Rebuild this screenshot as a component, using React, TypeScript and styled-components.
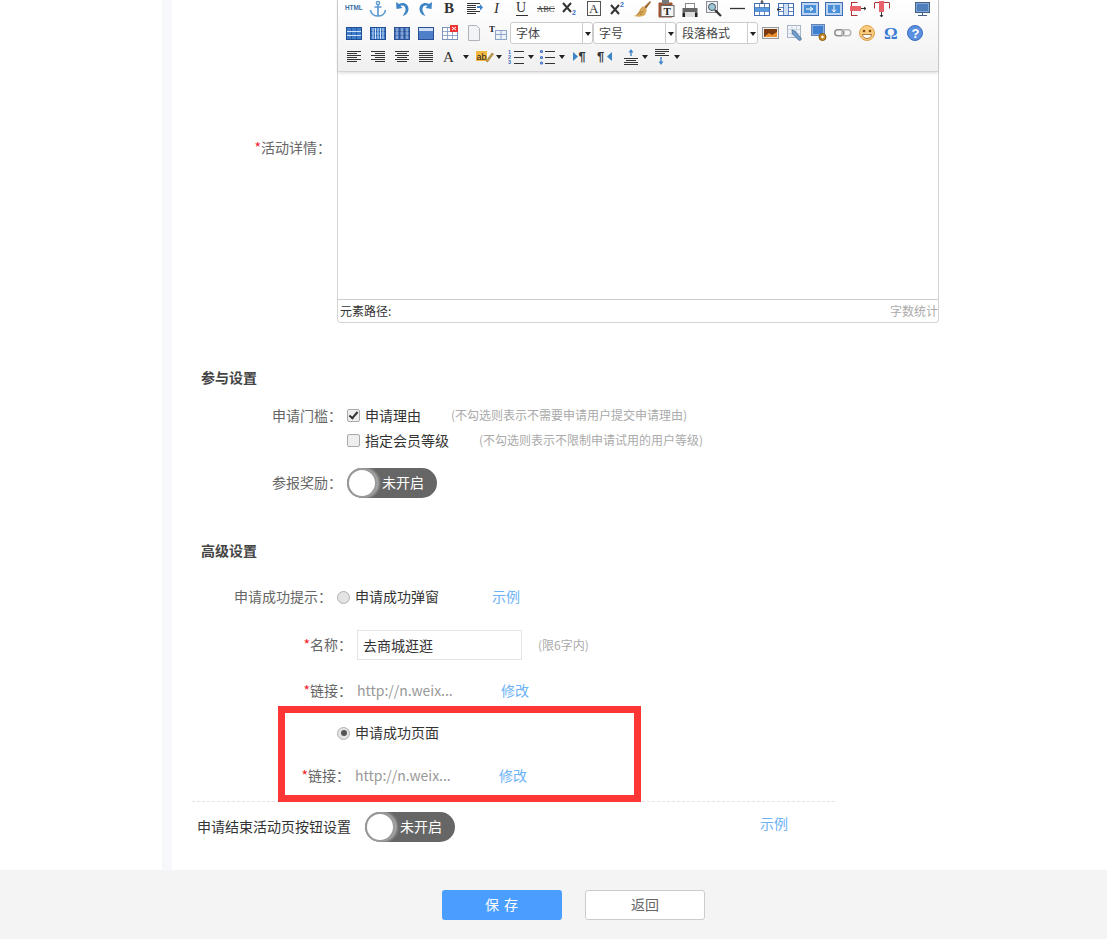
import React from "react";
import styled, { createGlobalStyle } from "styled-components";

const GlobalStyle = createGlobalStyle`
  html, body {
    margin: 0;
    padding: 0;
    background: #fff;
    font-family: "Noto Sans CJK SC", "Open Sans", sans-serif;
    font-size: 14px;
    color: #666;
  }
`;

const Ico = ({ children }: { children: React.ReactNode }) => (
  <svg width="18" height="18" viewBox="0 0 18 18">{children}</svg>
);

const serif = "'Liberation Serif', serif";
const sans = "'Liberation Sans', sans-serif";

// table icon used by most of the grid buttons
const Grid = ({ stroke = "#3f6db3", fill = "#dfe9f7", children }: { stroke?: string; fill?: string; children?: React.ReactNode }) => (
  <>
    <rect x="1.5" y="3.5" width="15" height="12" fill={fill} stroke={stroke} />
    <path d="M1.5 7.5h15M1.5 11.5h15M6.5 3.5v12M11.5 3.5v12" stroke={stroke} strokeWidth=".8" fill="none" />
    {children}
  </>
);

const Lines = ({ rows }: { rows: [number, number, number][] }) => (
  <path d={rows.map(([y, a, b]) => `M${a} ${y}.5H${b}`).join("")} stroke="#333" fill="none" />
);

const icons: Record<string, React.ReactNode> = {
  html: <Ico><text x="0" y="10" fontFamily={sans} fontSize="6.4" fontWeight="700" fill="#3a6ea5">HTML</text></Ico>,
  anchor: (
    <Ico>
      <circle cx="9" cy="3" r="1.6" fill="none" stroke="#5d9bd3" strokeWidth="1.4" />
      <path d="M9 4.5V16M5.5 7h7M1.5 10c.5 4 4 6 7.5 6s7-2 7.5-6" fill="none" stroke="#5d9bd3" strokeWidth="1.7" />
    </Ico>
  ),
  undo: <Ico><path d="M3 2l.5 7 6-1-2-2c3-1.5 5.500 1 5 4-.3 2-1.500 4-3 6 4-1 6-4 6-7 0-5-5-7.500-9.500-5z" fill="#3d85c6" /></Ico>,
  redo: <Ico><path d="M15 2l-.5 7-6-1 2-2c-3-1.500-5.500 1-5 4 .3 2 1.500 4 3 6-4-1-6-4-6-7 0-5 5-7.500 9.500-5z" fill="#3d85c6" /></Ico>,
  bold: <Ico><text x="3" y="13" fontFamily={serif} fontSize="15" fontWeight="700" fill="#333">B</text></Ico>,
  indent: (
    <Ico>
      <Lines rows={[[3, 2, 15], [5, 2, 11], [7, 2, 11], [9, 2, 11], [11, 2, 15], [13, 2, 11]]} />
      <path d="M12 6h3V4l3 3.500-3 3V8h-3z" fill="#3d85c6" />
    </Ico>
  ),
  italic: <Ico><text x="5" y="13" fontFamily={serif} fontSize="15" fontStyle="italic" fill="#333">I</text></Ico>,
  under: (
    <Ico>
      <text x="3" y="12" fontFamily={serif} fontSize="14" fill="#333">U</text>
      <path d="M3 15.500h12" stroke="#333" />
    </Ico>
  ),
  strike: (
    <Ico>
      <text x="0" y="12" fontFamily={serif} fontSize="8.500" fill="#444">ABC</text>
      <path d="M0 8.500h18" stroke="#444" />
    </Ico>
  ),
  sub: (
    <Ico>
      <path d="M2 3l8 9M10 3l-8 9" stroke="#333" strokeWidth="2" />
      <text x="11" y="15" fontFamily={sans} fontSize="7" fontWeight="700" fill="#3d6fc6">2</text>
    </Ico>
  ),
  boxA: (
    <Ico>
      <rect x="2.500" y="1.500" width="13" height="14" fill="#fff" stroke="#555" />
      <text x="4" y="13" fontFamily={serif} fontSize="13" fill="#333">A</text>
    </Ico>
  ),
  sup: (
    <Ico>
      <path d="M2 5l8 9M10 5l-8 9" stroke="#333" strokeWidth="2" />
      <text x="11" y="7" fontFamily={sans} fontSize="7" fontWeight="700" fill="#3d6fc6">2</text>
    </Ico>
  ),
  brush: (
    <Ico>
      <path d="M11 7l6-6 1 1-5 7z" fill="#9a6a2f" />
      <path d="M10 6l4 4-2 5c-3 2-7 2-11 1 3-1 5-4 6-7z" fill="#d8a95b" />
      <path d="M4 15l4-4M7 15l3-4" stroke="#a8772f" />
    </Ico>
  ),
  paste: (
    <Ico>
      <rect x="1.500" y="2.500" width="14" height="15" rx="1" fill="#a0522d" />
      <rect x="5" y="0" width="7" height="4" fill="#777" />
      <rect x="4" y="5.500" width="13" height="11" fill="#f4f4f4" stroke="#666" />
      <text x="6.500" y="15" fontFamily={serif} fontSize="11" fontWeight="700" fill="#222">T</text>
    </Ico>
  ),
  print: (
    <Ico>
      <rect x="4.500" y="3.500" width="9" height="6" fill="#fff" stroke="#888" />
      <rect x="1.500" y="8" width="15" height="5" fill="#666" />
      <rect x="1.500" y="13" width="15" height="4" fill="#222" />
      <rect x="4" y="12" width="10" height="5" fill="#ddd" />
    </Ico>
  ),
  preview: (
    <Ico>
      <rect x="1.500" y="1.500" width="11" height="11" fill="#eef2f7" stroke="#8a8f96" />
      <circle cx="7" cy="7" r="3.500" fill="#9cc8dc" stroke="#555" />
      <path d="M10 10l6 6" stroke="#333" strokeWidth="2.200" />
    </Ico>
  ),
  hr: <Ico><path d="M1 8.500h15" stroke="#333" strokeWidth="1.300" /></Ico>,
  rowAbove: (
    <Ico>
      <Grid fill="#fff"><rect x="2" y="8" width="14" height="3.500" fill="#5a9be0" /></Grid>
      <path d="M9 0v4M7.500 2h3" stroke="#333" />
    </Ico>
  ),
  colLeft: (
    <Ico>
      <Grid fill="#fff"><rect x="7" y="4" width="4" height="11" fill="#cfe0f5" /></Grid>
      <path d="M-1 9.500h5M1 8v3" stroke="#333" />
    </Ico>
  ),
  mergeRight: (
    <Ico>
      <rect x=".5" y="2.500" width="17" height="13" fill="#bcd4ef" stroke="#3f6db3" />
      <rect x="3" y="5" width="12" height="8" fill="#4a90d9" />
      <path d="M5 9h6M9 7l3 2-3 2" stroke="#fff" fill="none" />
    </Ico>
  ),
  mergeDown: (
    <Ico>
      <rect x=".5" y="2.500" width="17" height="13" fill="#bcd4ef" stroke="#3f6db3" />
      <rect x="3" y="5" width="12" height="8" fill="#4a90d9" />
      <path d="M9 5.500v6M7 9.500l2 2.500 2-2.500" stroke="#fff" fill="none" />
    </Ico>
  ),
  delCol: (
    <Ico>
      <path d="M2.500 2v14M2.500 2.500h6M2.500 15.500h6" stroke="#a33" fill="none" />
      <rect x="1" y="6" width="11" height="5" fill="#e8636b" />
      <path d="M12 8.500h5M15 7l2 1.500-2 1.500" stroke="#333" fill="none" />
    </Ico>
  ),
  delRow: (
    <Ico>
      <path d="M1.500 2.500v6M16.500 2.500v6M2 2.500h14" stroke="#a33" fill="none" />
      <rect x="6" y="1" width="5" height="11" fill="#e8636b" />
      <path d="M8.500 12v5M7 15l1.500 2 1.500-2" stroke="#333" fill="none" />
    </Ico>
  ),
  monitor: (
    <Ico>
      <rect x="1.500" y="2.500" width="14" height="10" fill="#7fa9d8" stroke="#46607f" />
      <rect x="3" y="4" width="11" height="7" fill="#4f7fbb" />
      <path d="M8.500 13v2M4 15.500h9" stroke="#46607f" />
    </Ico>
  ),
  tRow: <Ico><Grid fill="#3f7cc9" stroke="#1f4f94"><path d="M2 7.500h14M2 11.500h14" stroke="#cfe3fa" /></Grid></Ico>,
  tCol: <Ico><Grid fill="#3f7cc9" stroke="#1f4f94"><path d="M6.500 4v11M11.500 4v11M4 4v11M9 4v11M14 4v11" stroke="#cfe3fa" /></Grid></Ico>,
  tCell: <Ico><Grid fill="#4f7cc0" stroke="#2a4f94"><path d="M4 4v11M9 4v11M14 4v11" stroke="#dbe7f7" strokeWidth=".7" /></Grid></Ico>,
  tHead: (
    <Ico>
      <rect x="1.500" y="3.500" width="15" height="12" fill="#4f7fc8" stroke="#2a4f94" />
      <rect x="2" y="4" width="14" height="3" fill="#cfe0f5" />
    </Ico>
  ),
  tDel: (
    <Ico>
      <Grid fill="#fff" stroke="#7c95bd" />
      <rect x="9" y="1" width="8" height="7" fill="#e33" />
      <path d="M11 3l4 3M15 3l-4 3" stroke="#fff" />
    </Ico>
  ),
  page: (
    <Ico>
      <path d="M3.500 1.500h8l3 3v12h-11z" fill="#f1f3f6" stroke="#b0b4ba" />
    </Ico>
  ),
  tTitle: (
    <Ico>
      <text x="0" y="8" fontFamily={serif} fontSize="9" fontWeight="700" fill="#222">T</text>
      <rect x="6.500" y="6.500" width="11" height="9" fill="#eef2f9" stroke="#8fa3c8" />
      <path d="M6.500 10.500h11M12 6.500v9" stroke="#8fa3c8" />
    </Ico>
  ),
  alignL: <Ico><Lines rows={[[3, 2, 16], [5, 2, 12], [7, 2, 16], [9, 2, 12], [11, 2, 16], [13, 2, 12]]} /></Ico>,
  alignR: <Ico><Lines rows={[[3, 2, 16], [5, 6, 16], [7, 2, 16], [9, 6, 16], [11, 2, 16], [13, 6, 16]]} /></Ico>,
  alignC: <Ico><Lines rows={[[3, 2, 16], [5, 4, 14], [7, 2, 16], [9, 4, 14], [11, 2, 16], [13, 4, 14]]} /></Ico>,
  alignJ: <Ico><Lines rows={[[3, 2, 16], [5, 2, 16], [7, 2, 16], [9, 2, 16], [11, 2, 16], [13, 2, 16]]} /></Ico>,
  fontA: <Ico><text x="2" y="14" fontFamily={serif} fontSize="15" fill="#333">A</text></Ico>,
  ab: (
    <Ico>
      <rect x="0" y="3" width="11" height="10" fill="#f5b942" />
      <text x=".5" y="12" fontFamily={sans} fontSize="9" fill="#222">ab</text>
      <path d="M10 13l6-8 1.500 1-6 8z" fill="#c9a14a" stroke="#7a5a1f" strokeWidth=".5" />
    </Ico>
  ),
  ol: (
    <Ico>
      <text x="0" y="6" fontFamily={sans} fontSize="5.500" fontWeight="700" fill="#3d6fc6">1</text>
      <text x="0" y="11" fontFamily={sans} fontSize="5.500" fontWeight="700" fill="#3d6fc6">2</text>
      <text x="0" y="16" fontFamily={sans} fontSize="5.500" fontWeight="700" fill="#3d6fc6">3</text>
      <Lines rows={[[3, 6, 16], [9, 6, 16], [15, 6, 16]]} />
    </Ico>
  ),
  ul: (
    <Ico>
      <g fill="none" stroke="#3d6fc6" strokeWidth="1.200">
        <circle cx="2.500" cy="3.500" r="1" />
        <circle cx="2.500" cy="9.500" r="1" />
        <circle cx="2.500" cy="15" r="1" />
      </g>
      <Lines rows={[[3, 6, 16], [9, 6, 16], [15, 6, 16]]} />
    </Ico>
  ),
  ltr: (
    <Ico>
      <path d="M1 4l5 4.500L1 13z" fill="#3d85c6" />
      <text x="6.500" y="13" fontFamily={sans} fontSize="13" fontWeight="700" fill="#333">¶</text>
    </Ico>
  ),
  rtl: (
    <Ico>
      <text x="1" y="13" fontFamily={sans} fontSize="13" fontWeight="700" fill="#333">¶</text>
      <path d="M16 4l-5 4.500 5 4.500z" fill="#3d85c6" />
    </Ico>
  ),
  lineUp: (
    <Ico>
      <path d="M9 1l2.500 3.500h-1.800V8h-1.400V4.500H6.500z" fill="#3d85c6" />
      <Lines rows={[[10, 2, 16], [12, 4, 14], [14, 2, 16], [16, 2, 16]]} />
    </Ico>
  ),
  lineDown: (
    <Ico>
      <Lines rows={[[1, 1, 15], [3, 1, 15], [5, 1, 11], [7, 1, 15]]} />
      <path d="M7 17l-2.500-3.500h1.800V9h1.400v4.500h1.800z" fill="#3d85c6" />
    </Ico>
  ),
  image: (
    <Ico>
      <rect x=".5" y="3.500" width="16" height="11" fill="#eee" stroke="#999" />
      <rect x="2" y="5" width="13" height="8" fill="#7a3a10" />
      <path d="M2 13l5-4 3 2 5-3v5z" fill="#e8902c" />
    </Ico>
  ),
  wrench: (
    <Ico>
      <rect x="1.500" y="1.500" width="13" height="12" fill="#f2f5fa" stroke="#a9b5c6" />
      <path d="M1.500 5.500h13M1.500 9.500h13M6 1.500v12M10.500 1.500v12" stroke="#c3ccd9" strokeWidth=".7" />
      <path d="M6 6l3 1 6 7c1 2-1 3-2.500 2l-6-6z" fill="#6f9cc9" stroke="#3f6a96" strokeWidth=".7" />
    </Ico>
  ),
  video: (
    <Ico>
      <rect x="1.500" y=".5" width="13" height="11" fill="#8db0de" stroke="#5f83b5" />
      <rect x="3" y="2" width="10" height="8" fill="#3f7fd0" />
      <circle cx="12.500" cy="13" r="3.500" fill="#c88a2a" stroke="#8a5a10" />
      <circle cx="12.500" cy="13" r="1.200" fill="#fff" />
    </Ico>
  ),
  link: (
    <Ico>
      <rect x=".8" y="5.800" width="9" height="6" rx="3" fill="none" stroke="#8e8e8e" strokeWidth="1.500" />
      <rect x="7.800" y="5.800" width="9" height="6" rx="3" fill="none" stroke="#b5b5b5" strokeWidth="1.500" />
    </Ico>
  ),
  smile: (
    <Ico>
      <circle cx="9" cy="9" r="7.500" fill="#f9cd7c" stroke="#e0a050" />
      <circle cx="6" cy="7" r="1.300" fill="#8a4a10" />
      <circle cx="12" cy="7" r="1.300" fill="#8a4a10" />
      <path d="M4.500 10.500h9c-.5 3-2.500 4-4.500 4s-4-1-4.500-4z" fill="#fff" stroke="#8a4a10" strokeWidth=".7" />
    </Ico>
  ),
  omega: <Ico><text x="2" y="15" fontFamily={serif} fontSize="17" fontWeight="700" fill="#3a7bd5">Ω</text></Ico>,
  help: (
    <Ico>
      <circle cx="9" cy="9" r="7.500" fill="#5b8fe0" stroke="#3e6fc0" />
      <text x="5.500" y="14" fontFamily={sans} fontSize="13" fontWeight="700" fill="#fff">?</text>
    </Ico>
  ),
};

type Item = { icon: string; ml?: number; w?: number; caret?: boolean };

const row1: Item[] = [
  { icon: "html" }, { icon: "anchor" }, { icon: "undo" }, { icon: "redo" }, { icon: "bold" }, { icon: "indent" },
  { icon: "italic" }, { icon: "under" }, { icon: "strike" }, { icon: "sub" }, { icon: "boxA" }, { icon: "sup" },
  { icon: "brush" }, { icon: "paste" }, { icon: "print" }, { icon: "preview" }, { icon: "hr" }, { icon: "rowAbove" },
  { icon: "colLeft" }, { icon: "mergeRight" }, { icon: "mergeDown" }, { icon: "delCol" }, { icon: "delRow" },
  { icon: "monitor", ml: 17 },
];
const row2a: Item[] = [
  { icon: "tRow" }, { icon: "tCol" }, { icon: "tCell" }, { icon: "tHead" }, { icon: "tDel" }, { icon: "page" }, { icon: "tTitle" },
];
const row2b: Item[] = [
  { icon: "image", ml: 1 }, { icon: "wrench" }, { icon: "video" }, { icon: "link" }, { icon: "smile" }, { icon: "omega" }, { icon: "help" },
];
const row3: Item[] = [
  { icon: "alignL" }, { icon: "alignR" }, { icon: "alignC" }, { icon: "alignJ" },
  { icon: "fontA", caret: true },
  { icon: "ab", ml: 6, w: 20, caret: true },
  { icon: "ol", ml: 5, w: 20, caret: true },
  { icon: "ul", ml: 4, w: 20, caret: true },
  { icon: "ltr", ml: 4 }, { icon: "rtl" },
  { icon: "lineUp", ml: 4, w: 20, caret: true },
  { icon: "lineDown", ml: 5, w: 20, caret: true },
];

const renderTools = (items: Item[]) =>
  items.map((t) => (
    <React.Fragment key={t.icon}>
      <Tool $w={t.w ?? 24} $ml={t.ml ?? 0}>{icons[t.icon]}</Tool>
      {t.caret && <Caret />}
    </React.Fragment>
  ));

const Switch = () => (
  <Toggle>
    <Knob />
    <ToggleText>未开启</ToggleText>
  </Toggle>
);

const App = () => (
  <Page>
    <GlobalStyle />
    <Main>
      <Gutter />
      <Form>
        <EditorRow>
          <Label $w={159} $top={137}><Star>*</Star>活动详情：</Label>
          <Editor>
            <Toolbar>
              <FirstToolRow>{renderTools(row1)}</FirstToolRow>
              <ToolRow>
                {renderTools(row2a)}
                <Combo $w={83}>字体</Combo>
                <Combo $w={83}>字号</Combo>
                <Combo $w={82}>段落格式</Combo>
                {renderTools(row2b)}
              </ToolRow>
              <ToolRow>{renderTools(row3)}</ToolRow>
            </Toolbar>
            <EditArea />
            <StatusBar>
              <span>元素路径:</span>
              <WordCount>字数统计</WordCount>
            </StatusBar>
          </Editor>
        </EditorRow>

        <SectionTitle $mt={45}>参与设置</SectionTitle>
        <Row $mt={15} $h={25}>
          <Label $w={170}>申请门槛：</Label>
          <Checkbox $checked />
          <OptionText>申请理由</OptionText>
          <Hint $ml={30}>(不勾选则表示不需要申请用户提交申请理由)</Hint>
        </Row>
        <Row $h={25} $pl={175}>
          <Checkbox />
          <OptionText>指定会员等级</OptionText>
          <Hint $ml={30}>(不勾选则表示不限制申请试用的用户等级)</Hint>
        </Row>
        <Row $mt={15} $h={30}>
          <Label $w={170}>参报奖励：</Label>
          <Switch />
        </Row>

        <SectionTitle $mt={43}>高级设置</SectionTitle>
        <Row $mt={24} $h={24}>
          <Label $w={160}>申请成功提示：</Label>
          <Radio />
          <OptionText>申请成功弹窗</OptionText>
          <LinkText $ml={53}>示例</LinkText>
        </Row>
        <Row $mt={21} $h={30}>
          <Label $w={180}><Star>*</Star>名称：</Label>
          <NameInput>去商城逛逛</NameInput>
          <Hint $ml={16}>(限6字内)</Hint>
        </Row>
        <Row $mt={19} $h={24}>
          <Label $w={180}><Star>*</Star>链接：</Label>
          <UrlText>http://n.weix...</UrlText>
          <LinkText $ml={48}>修改</LinkText>
        </Row>

        <Highlight>
          <Row $h={20} $mt={10} $pl={52}>
            <Radio $checked />
            <OptionText>申请成功页面</OptionText>
          </Row>
          <Row $h={24} $mt={21}>
            <Label $w={65}><Star>*</Star>链接：</Label>
            <UrlText>http://n.weix...</UrlText>
            <LinkText $ml={48}>修改</LinkText>
          </Row>
        </Highlight>
        <Divider />

        <Row $mt={10} $h={30} $pl={25}>
          <EndLabel>申请结束活动页按钮设置</EndLabel>
          <Switch />
          <LinkText $ml={305} $up>示例</LinkText>
        </Row>
      </Form>
    </Main>
    <Footer>
      <SaveButton>保 存</SaveButton>
      <BackButton>返回</BackButton>
    </Footer>
  </Page>
);

export default App;

const Page = styled.div`
  display: flex;
  flex-direction: column;
  width: 1107px;
  height: 939px;
  overflow: hidden;
`;

const Main = styled.main`
  display: flex;
  height: 870px;
`;

const Gutter = styled.div`
  width: 10px;
  margin-left: 162px;
  background: #f6f8fc;
`;

const Form = styled.div`
  flex: 1;
  display: flex;
  flex-direction: column;
  min-width: 0;
`;

const EditorRow = styled.div`
  display: flex;
  align-items: flex-start;
`;

const Editor = styled.div`
  width: 602px;
  margin-left: 1px;
  box-sizing: border-box;
  border: 1px solid #d4d4d4;
  border-top: none;
  border-radius: 0 0 4px 4px;
`;

const Toolbar = styled.div`
  height: 72px;
  box-sizing: border-box;
  padding-left: 4px;
  background: linear-gradient(#ffffff, #f0f0f0);
  box-shadow: 0 1px 3px rgba(0, 0, 0, 0.15);
  border-bottom: 1px solid #d4d4d4;
  position: relative;
`;

const ToolRow = styled.div`
  display: flex;
  align-items: center;
  height: 24px;
`;

const FirstToolRow = styled(ToolRow)`
  height: 21px;
  box-sizing: border-box;
  padding-bottom: 4px;
`;

const Tool = styled.span<{ $w: number; $ml: number }>`
  flex: none;
  display: flex;
  align-items: center;
  justify-content: center;
  width: ${(p) => p.$w}px;
  margin-left: ${(p) => p.$ml}px;
`;

const Caret = styled.span`
  flex: none;
  width: 0;
  height: 0;
  margin-left: 1px;
  border: 3.5px solid transparent;
  border-top: 4px solid #222;
  border-bottom: none;
`;

const Combo = styled.div<{ $w: number }>`
  flex: none;
  position: relative;
  box-sizing: border-box;
  width: ${(p) => p.$w}px;
  height: 22px;
  padding-left: 5px;
  background: #fff;
  border: 1px solid #ccc;
  border-radius: 3px;
  font-size: 12px;
  line-height: 20px;
  color: #444;

  &::before {
    content: "";
    position: absolute;
    top: 0;
    bottom: 0;
    right: 9px;
    border-left: 1px solid #ccc;
  }

  &::after {
    content: "";
    position: absolute;
    top: 9px;
    right: 1px;
    border: 3px solid transparent;
    border-top: 4px solid #222;
    border-bottom: none;
  }
`;

const EditArea = styled.div`
  height: 227px;
  box-sizing: border-box;
  background: #fff;
`;

const StatusBar = styled.div`
  display: flex;
  justify-content: space-between;
  height: 23px;
  box-sizing: border-box;
  padding: 0 0 0 2px;
  border-top: 1px solid #ccc;
  font-size: 12px;
  line-height: 21px;
  color: #333;
`;

const WordCount = styled.span`
  color: #aaa;
`;

const SectionTitle = styled.h3<{ $mt: number }>`
  margin: ${(p) => p.$mt}px 0 0 29px;
  padding-bottom: 2px;
  height: 18px;
  font-size: 14px;
  font-weight: 700;
  line-height: 18px;
  color: #444;
`;

const Row = styled.div<{ $mt?: number; $h: number; $pl?: number }>`
  display: flex;
  align-items: center;
  height: ${(p) => p.$h}px;
  margin-top: ${(p) => p.$mt ?? 0}px;
  padding-left: ${(p) => p.$pl ?? 0}px;
`;

const Label = styled.label<{ $w: number; $top?: number }>`
  flex: none;
  box-sizing: border-box;
  width: ${(p) => p.$w}px;
  margin-top: ${(p) => p.$top ?? 0}px;
  margin-right: 5px;
  padding-bottom: 2px;
  text-align: right;
  line-height: 20px;
  color: #666;
`;

const Star = styled.span`
  color: #f5222d;
`;

const Checkbox = styled.span<{ $checked?: boolean }>`
  flex: none;
  position: relative;
  box-sizing: border-box;
  width: 13px;
  height: 13px;
  margin-right: 5px;
  background: #eee;
  border: 1px solid #aaa;
  border-radius: 2px;

  ${(p) =>
    p.$checked &&
    `&::after {
      content: "";
      position: absolute;
      left: 3px;
      top: 0px;
      width: 3px;
      height: 7px;
      border: solid #333;
      border-width: 0 2px 2px 0;
      transform: rotate(40deg);
    }`}
`;

const Radio = styled.span<{ $checked?: boolean }>`
  flex: none;
  position: relative;
  box-sizing: border-box;
  width: 13px;
  height: 13px;
  margin-right: 5px;
  background: #e4e4e4;
  border: 1px solid #b0b0b0;
  border-radius: 50%;

  ${(p) =>
    p.$checked &&
    `&::after {
      content: "";
      position: absolute;
      left: 2.5px;
      top: 2.5px;
      width: 6px;
      height: 6px;
      background: #555;
      border-radius: 50%;
    }`}
`;

const OptionText = styled.span`
  padding-bottom: 2px;
  color: #333;
  font-size: 14px;
`;

const Hint = styled.span<{ $ml: number }>`
  margin-left: ${(p) => p.$ml}px;
  padding-bottom: 2px;
  font-size: 12px;
  color: #aaa;
`;

const LinkText = styled.a<{ $ml: number; $up?: boolean }>`
  margin-left: ${(p) => p.$ml}px;
  margin-top: ${(p) => (p.$up ? -6 : 0)}px;
  padding-bottom: 2px;
  font-size: 14px;
  color: #6cb2f7;
`;

const NameInput = styled.div`
  flex: none;
  box-sizing: border-box;
  width: 165px;
  height: 30px;
  padding: 0 5px;
  border: 1px solid #e4e4e4;
  font-size: 14px;
  line-height: 28px;
  color: #333;
`;

const UrlText = styled.span`
  width: 96px;
  padding-bottom: 2px;
  font-size: 14px;
  white-space: nowrap;
  color: #999;
`;

const Highlight = styled.div`
  position: relative;
  z-index: 1;
  box-sizing: border-box;
  width: 363px;
  height: 96px;
  margin: 3px 0 0 106px;
  border: 7px solid #ff3636;
`;

const Divider = styled.div`
  width: 643px;
  margin: -1px 0 0 20px;
  border-top: 1px dashed #e4e4e4;
`;

const EndLabel = styled.span`
  width: 168px;
  flex: none;
  padding-bottom: 2px;
  color: #333;
`;

const Toggle = styled.div`
  flex: none;
  display: flex;
  align-items: center;
  box-sizing: border-box;
  width: 90px;
  height: 30px;
  border-radius: 15px;
  background: #666;
`;

const Knob = styled.span`
  flex: none;
  box-sizing: border-box;
  width: 30px;
  height: 30px;
  background: #fff;
  border: 2px solid #999;
  border-radius: 50%;
  box-shadow: 2px 0 3px rgba(255, 255, 255, 0.5);
`;

const ToggleText = styled.span`
  margin-left: 5px;
  padding-bottom: 2px;
  font-size: 14px;
  color: #fff;
`;

const Footer = styled.footer`
  display: flex;
  gap: 23px;
  height: 69px;
  box-sizing: border-box;
  padding: 20px 0 0 442px;
  background: #f4f4f4;
`;

const SaveButton = styled.button`
  width: 120px;
  height: 30px;
  padding: 0 0 2px;
  border: none;
  border-radius: 3px;
  background: #4a9eff;
  font-family: inherit;
  font-size: 14px;
  letter-spacing: 1px;
  color: #fff;
`;

const BackButton = styled.button`
  width: 120px;
  height: 30px;
  padding: 0 0 2px;
  border: 1px solid #ccc;
  border-radius: 3px;
  background: #fff;
  font-family: inherit;
  font-size: 14px;
  color: #666;
`;
